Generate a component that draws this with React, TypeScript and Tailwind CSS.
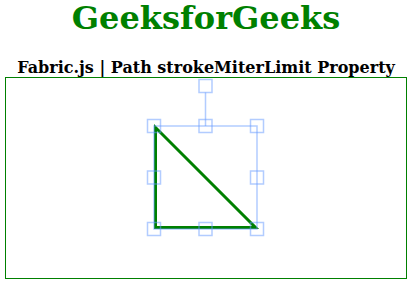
import React from "react";

const ctrl = "rgba(102,153,255,0.5)";

export default function App() {
  const corners: [number, number][] = [
    [148, 48],
    [199.5, 48],
    [251, 48],
    [148, 99.5],
    [251, 99.5],
    [148, 151],
    [199.5, 151],
    [251, 151],
    [199.5, 8],
  ];
  return (
    <div className="flex flex-col items-center bg-white font-['DejaVu_Serif',serif] text-black">
      <h1 className="text-[32px] leading-[37px] font-bold text-[#008000] mb-[21.44px]">GeeksforGeeks</h1>
      <b className="block text-[16px] leading-[19px] font-bold">Fabric.js | Path strokeMiterLimit Property</b>
      <div className="w-[402px] h-[202px] border border-[#008000]">
        <svg width="400" height="200" viewBox="0 0 400 200">
          <path
            d="M 149.5 49.5 L 149.5 149.5 L 249.5 149.5 Z"
            fill="none"
            stroke="#008000"
            strokeWidth="3"
            strokeMiterlimit={4}
          />
          <rect x="148" y="48" width="103" height="103" fill="none" stroke={ctrl} strokeWidth="1.5" />
          <line x1="199.5" y1="14.5" x2="199.5" y2="48" stroke={ctrl} strokeWidth="1.5" />
          {corners.map(([cx, cy], i) => (
            <rect
              key={i}
              x={cx - 6.5}
              y={cy - 6.5}
              width="13"
              height="13"
              fill="none"
              stroke={ctrl}
              strokeWidth="1.5"
            />
          ))}
        </svg>
      </div>
    </div>
  );
}
